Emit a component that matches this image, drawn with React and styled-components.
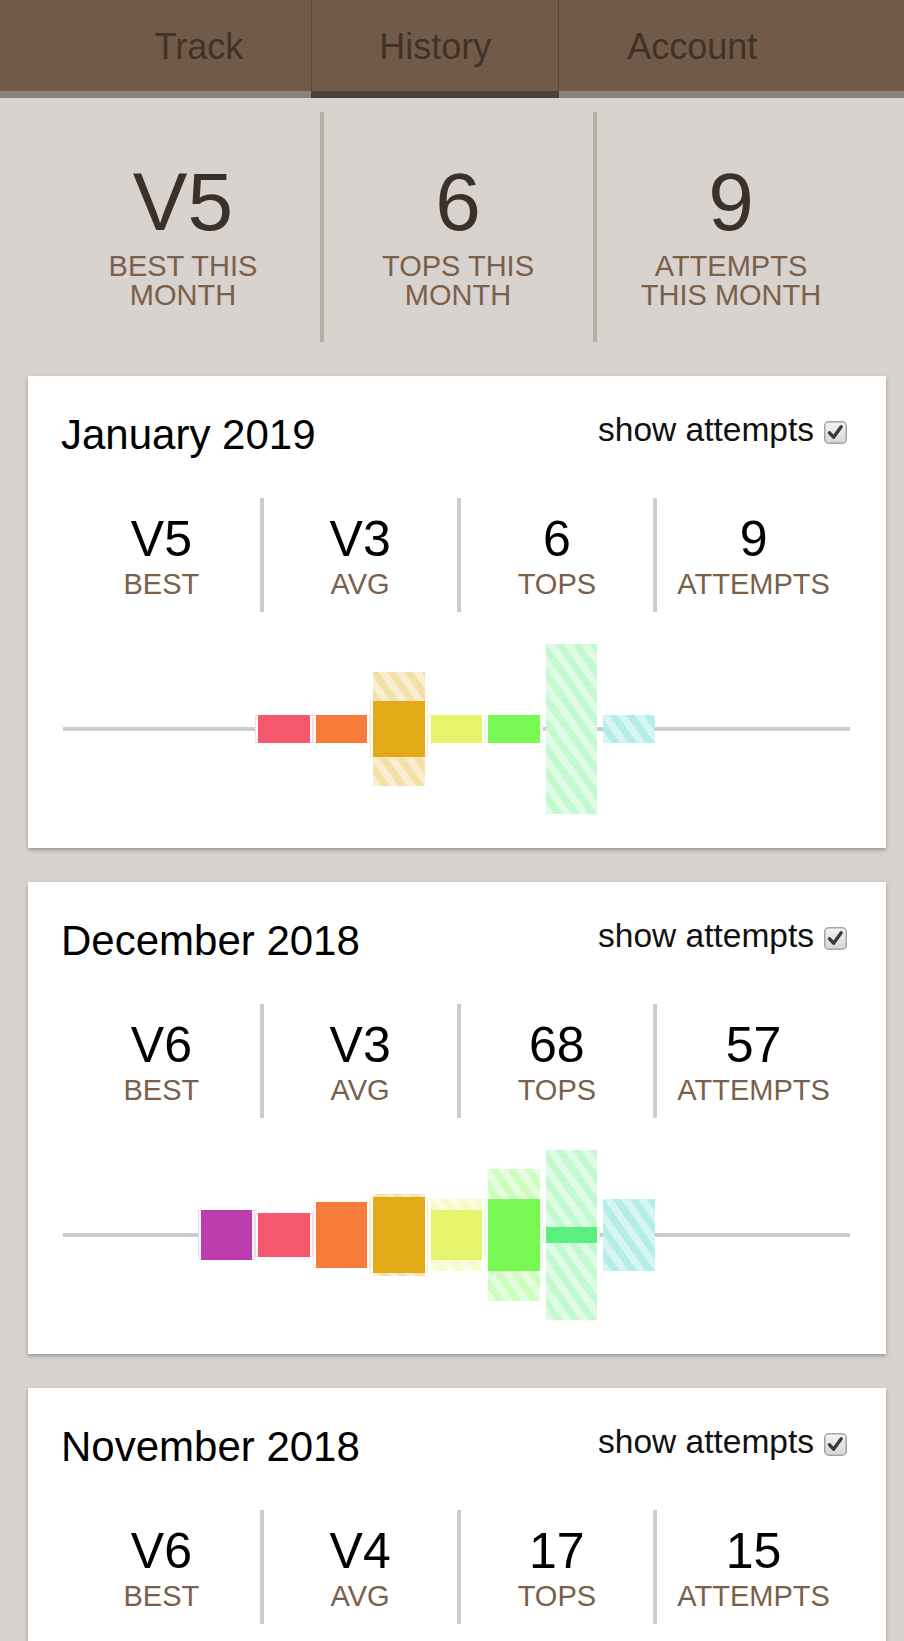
import React from 'react';
import styled, { createGlobalStyle } from 'styled-components';

const GlobalStyle = createGlobalStyle`
  html, body {
    margin: 0;
    padding: 0;
    background: #d8d3cf;
  }
  body {
    font-family: 'Liberation Sans', Arial, sans-serif;
  }
  * {
    box-sizing: border-box;
  }
`;

// rgb triplets per grade, V0 .. V8
const gradeColors = [
  '189,60,174',
  '245,88,109',
  '247,124,57',
  '227,170,23',
  '229,243,109',
  '121,248,83',
  '90,240,126',
  '51,208,186',
  '120,150,240',
];

const months = [
  {
    id: 'jan-2019',
    title: 'January 2019',
    best: 'V5',
    avg: 'V3',
    tops: 6,
    attempts: 9,
    grades: [
      { s: 0, a: 0 },
      { s: 1, a: 0 },
      { s: 1, a: 0 },
      { s: 2, a: 2 },
      { s: 1, a: 0 },
      { s: 1, a: 0 },
      { s: 0, a: 6 },
      { s: 0, a: 1 },
      { s: 0, a: 0 },
    ],
  },
  {
    id: 'dec-2018',
    title: 'December 2018',
    best: 'V6',
    avg: 'V3',
    tops: 68,
    attempts: 57,
    grades: [
      { s: 9, a: 0 },
      { s: 8, a: 0 },
      { s: 12, a: 0 },
      { s: 14, a: 1 },
      { s: 9, a: 4 },
      { s: 13, a: 11 },
      { s: 3, a: 28 },
      { s: 0, a: 13 },
      { s: 0, a: 0 },
    ],
  },
  {
    id: 'nov-2018',
    title: 'November 2018',
    best: 'V6',
    avg: 'V4',
    tops: 17,
    attempts: 15,
    grades: [
      { s: 0, a: 0 },
      { s: 2, a: 0 },
      { s: 4, a: 1 },
      { s: 5, a: 3 },
      { s: 4, a: 4 },
      { s: 1, a: 3 },
      { s: 1, a: 2 },
      { s: 0, a: 2 },
      { s: 0, a: 0 },
    ],
  },
];

const CHART_HEIGHT = 170;

export default function App() {
  return (
    <>
      <GlobalStyle />
      <Nav>
        <Tab>Track</Tab>
        <Tab $active>History</Tab>
        <Tab>Account</Tab>
      </Nav>
      <Main>
        <Summary>
          <SummaryItem>
            <SummaryValue>V5</SummaryValue>
            <SummaryLabel>BEST THIS MONTH</SummaryLabel>
          </SummaryItem>
          <SummaryItem>
            <SummaryValue>6</SummaryValue>
            <SummaryLabel>TOPS THIS MONTH</SummaryLabel>
          </SummaryItem>
          <SummaryItem>
            <SummaryValue>9</SummaryValue>
            <SummaryLabel>ATTEMPTS THIS MONTH</SummaryLabel>
          </SummaryItem>
        </Summary>

        {months.map(month => {
          const max = Math.max(...month.grades.map(g => g.s + g.a));
          const unit = CHART_HEIGHT / max;
          return (
            <Card key={month.id}>
              <CardHead>
                <Title>{month.title}</Title>
                <Toggle>
                  show attempts
                  <CheckBox>
                    <svg width="23" height="23" viewBox="0 0 23 23">
                      <defs>
                        <linearGradient id={`cb-${month.id}`} x1="0" y1="0" x2="0" y2="1">
                          <stop offset="0" stopColor="#f4f4f4" />
                          <stop offset="1" stopColor="#d6d6d6" />
                        </linearGradient>
                      </defs>
                      <rect x="0.75" y="0.75" width="21.5" height="21.5" rx="4" fill={`url(#cb-${month.id})`} stroke="#a4a4a4" strokeWidth="1.5" />
                      <path d="M5.5 11.8 L9.6 16.2 L17.2 5.8" fill="none" stroke="#3a3a3a" strokeWidth="3.4" strokeLinecap="round" strokeLinejoin="round" />
                    </svg>
                  </CheckBox>
                </Toggle>
              </CardHead>

              <Stats>
                <Stat>
                  <StatValue>{month.best}</StatValue>
                  <StatLabel>BEST</StatLabel>
                </Stat>
                <Stat>
                  <StatValue>{month.avg}</StatValue>
                  <StatLabel>AVG</StatLabel>
                </Stat>
                <Stat>
                  <StatValue>{month.tops}</StatValue>
                  <StatLabel>TOPS</StatLabel>
                </Stat>
                <Stat>
                  <StatValue>{month.attempts}</StatValue>
                  <StatLabel>ATTEMPTS</StatLabel>
                </Stat>
              </Stats>

              <Chart>
                {month.grades.map((g, i) => (
                  <Slot key={i}>
                    {g.a > 0 && (
                      <Tries $rgb={gradeColors[i]} style={{ height: (g.s + g.a) * unit }} />
                    )}
                    {g.s > 0 && (
                      <Sends $rgb={gradeColors[i]} style={{ height: g.s * unit }} />
                    )}
                  </Slot>
                ))}
              </Chart>
            </Card>
          );
        })}
      </Main>
    </>
  );
}

const Nav = styled.nav`
  display: flex;
  justify-content: center;
  height: 98px;
  padding-left: 8px;
  background: linear-gradient(#725a48 0 91px, #878380 91px 98px);
`;

const Tab = styled.div`
  height: 98px;
  padding: 29px 67px 0;
  font-size: 36px;
  line-height: 1;
  color: #3f3329;
  border-left: 1px solid ${p => (p.$active ? '#584738' : 'transparent')};
  border-right: 1px solid ${p => (p.$active ? '#584738' : 'transparent')};
  border-bottom: 7px solid ${p => (p.$active ? '#4b4138' : 'transparent')};
`;

const Main = styled.main`
  padding: 0 0 40px 8px;
`;

const Summary = styled.section`
  display: grid;
  grid-template-columns: repeat(3, 1fr);
  width: 819px;
  margin: 14px auto 34px;
`;

const SummaryItem = styled.div`
  padding: 39px 36px 32px;
  text-align: center;

  &:not(:first-child) {
    border-left: 4px solid #b8aea4;
  }
`;

const SummaryValue = styled.div`
  font-size: 82px;
  line-height: 101px;
  color: #3c3128;
`;

const SummaryLabel = styled.div`
  font-size: 29px;
  line-height: 29px;
  color: #7b6049;
`;

const Card = styled.article`
  width: 858px;
  margin: 0 0 34px 20px;
  padding: 35px 36px 34px 35px;
  background: #fff;
  box-shadow: 0 2px 4px rgba(0, 0, 0, 0.3);
`;

const CardHead = styled.header`
  display: flex;
  justify-content: space-between;
  align-items: flex-start;
`;

const Title = styled.h2`
  margin: 0 0 0 -2px;
  font-size: 42px;
  font-weight: normal;
  line-height: 47px;
  color: #000;
`;

const Toggle = styled.label`
  display: inline-flex;
  align-items: center;
  gap: 10px;
  font-size: 33.5px;
  line-height: 38px;
  color: #111;
`;

const CheckBox = styled.span`
  display: block;
  width: 23px;
  height: 23px;
  margin: 5px 3px 0 0;

  svg {
    display: block;
  }
`;

const Stats = styled.div`
  display: grid;
  grid-template-columns: repeat(4, 1fr);
  margin-top: 40px;
`;

const Stat = styled.div`
  padding: 13px 0 11px;
  text-align: center;

  &:not(:first-child) {
    border-left: 4px solid #ccc;
  }
`;

const StatValue = styled.div`
  font-size: 50px;
  line-height: 57px;
  color: #000;
`;

const StatLabel = styled.div`
  font-size: 29px;
  line-height: 33px;
  color: #7a5f4b;
`;

const Chart = styled.div`
  display: flex;
  justify-content: center;
  align-items: center;
  height: ${CHART_HEIGHT}px;
  margin-top: 32px;
  background: linear-gradient(#ccc, #ccc) center / 100% 4px no-repeat;
`;

const Slot = styled.div`
  display: grid;
  place-items: center;
  flex: 0 0 57.5px;
  height: 100%;
`;

const Tries = styled.div`
  grid-area: 1 / 1;
  width: calc(100% - 6px);
  background:
    repeating-linear-gradient(
      55deg,
      rgba(${p => p.$rgb}, 0.2) 0 7px,
      rgba(${p => p.$rgb}, 0.37) 7px 14px
    ),
    #fff;
`;

const Sends = styled.div`
  grid-area: 1 / 1;
  width: 100%;
  padding: 0 3px;
  background: #fff;
  box-shadow: inset 0 0 0 1px rgba(${p => p.$rgb}, 0.22);

  &::after {
    content: '';
    display: block;
    height: 100%;
    background: rgb(${p => p.$rgb});
  }
`;
